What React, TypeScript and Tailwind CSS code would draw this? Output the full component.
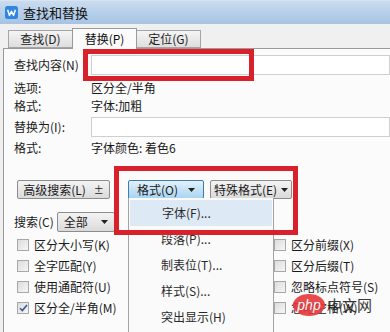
import React from "react";

const font = "font-['Microsoft_YaHei','Noto_Sans_CJK_SC','Noto_Sans',sans-serif]";

function Caret() {
  return (
    <svg width="7" height="4" viewBox="0 0 7 4" className="shrink-0">
      <path d="M0 0h7L3.5 4z" fill="#222" />
    </svg>
  );
}

function Tab({ label, active }: { label: string; active?: boolean }) {
  return active ? (
    <div className="relative z-10 -mb-px flex h-[21px] w-[65px] items-center justify-center border border-b-0 border-[#9a9a9a] bg-[#fbfbfb] text-[12px] text-[#111]">
      {label}
    </div>
  ) : (
    <div className="flex h-[18px] w-[65px] items-center justify-center border border-[#a5a5a5] bg-gradient-to-b from-[#f4f4f4] to-[#dedede] text-[12px] text-[#222]">
      {label}
    </div>
  );
}

function Check({ label, checked }: { label: string; checked?: boolean }) {
  return (
    <div className="flex h-[21px] items-center gap-[5px] text-[12px] text-[#1a1a1a]">
      <span className="relative flex h-[12px] w-[12px] items-center justify-center border border-[#a8a8a8] bg-gradient-to-br from-[#dcdcdc] to-[#f6f6f6]">
        {checked ? (
          <svg width="9" height="8" viewBox="0 0 9 8">
            <path d="M1 4.2 3.4 6.6 8 1" stroke="#3a5a99" strokeWidth="1.6" fill="none" />
          </svg>
        ) : null}
      </span>
      <span>{label}</span>
    </div>
  );
}

function FieldRow({ label, children, h }: { label: string; children: React.ReactNode; h: string }) {
  return (
    <div className={`flex items-center ${h}`}>
      <span className="w-[77px] shrink-0 text-[12px] text-[#1a1a1a]">{label}</span>
      {children}
    </div>
  );
}

const menuItems = ["字体(F)...", "段落(P)...", "制表位(T)...", "样式(S)...", "突出显示(H)"];

export default function App() {
  return (
    <div className={`relative flex h-[332px] w-[390px] flex-col overflow-hidden bg-[#f0f0f0] ${font}`}>
      {/* title bar */}
      <div className="flex h-[24px] items-center gap-[5px] border-t border-[#d8e4f0] bg-gradient-to-b from-[#cadcef] to-[#a6c3e3] px-[5px]">
        <svg width="13" height="13" viewBox="0 0 13 13">
          <rect width="13" height="13" rx="2.5" fill="#2f86e0" />
          <path d="M2.6 3.8 4.5 9.4 6.5 5.4 8.5 9.4 10.4 3.8" stroke="#fff" strokeWidth="1.5" fill="none" strokeLinejoin="round" />
        </svg>
        <span className="text-[13px] text-[#111]">查找和替换</span>
      </div>

      {/* tabs */}
      <div className="flex h-[24px] items-end pl-[8px]">
        <Tab label="查找(D)" />
        <div className="-ml-px">
          <Tab label="替换(P)" active />
        </div>
        <div className="-ml-px">
          <Tab label="定位(G)" />
        </div>
      </div>

      {/* panel */}
      <div className="ml-[3px] flex flex-1 flex-col border-l border-t border-[#9a9a9a] bg-[#fbfbfb] pl-[10px] pt-[6px]">
        <FieldRow label="查找内容(N)" h="h-[20px]">
          <div className="h-[20px] flex-1 border border-[#cfcfcf] bg-white" />
        </FieldRow>
        <div className="mt-[4px]" />
        <FieldRow label="选项:" h="h-[18px]">
          <span className="text-[12px] text-[#1a1a1a]">区分全/半角</span>
        </FieldRow>
        <FieldRow label="格式:" h="h-[18px]">
          <span className="text-[12px] text-[#1a1a1a]">字体:加粗</span>
        </FieldRow>
        <div className="mt-[2px]" />
        <FieldRow label="替换为(I):" h="h-[20px]">
          <div className="h-[20px] flex-1 border border-[#cfcfcf] bg-white" />
        </FieldRow>
        <div className="mt-[2px]" />
        <FieldRow label="格式:" h="h-[18px]">
          <span className="text-[12px] text-[#1a1a1a]">字体颜色: 着色6</span>
        </FieldRow>

        {/* buttons */}
        <div className="mt-[23px] flex h-[19px] items-center pl-[3px]">
          <div className="flex h-[19px] w-[93px] items-center justify-center gap-[8px] rounded-[2px] border border-[#8c8c8c] bg-gradient-to-b from-[#f4f4f4] to-[#dadada] text-[12px] text-[#1a1a1a]">
            <span>高级搜索(L)</span>
            <span className="text-[10px]">±</span>
          </div>
          <div className="ml-[18px] flex h-[19px] w-[76px] items-center justify-center gap-[10px] rounded-[2px] border border-[#3d7bad] bg-gradient-to-b from-[#e3f1fb] to-[#a9d4f1] text-[12px] text-[#1a1a1a]">
            <span>格式(O)</span>
            <Caret />
          </div>
          <div className="ml-[6px] flex h-[19px] w-[82px] items-center justify-center gap-[4px] rounded-[2px] border border-[#8c8c8c] bg-gradient-to-b from-[#f4f4f4] to-[#dadada] text-[12px] text-[#1a1a1a]">
            <span>特殊格式(E)</span>
            <Caret />
          </div>
        </div>

        {/* options */}
        <div className="flex">
          <div className="flex w-[260px] flex-col">
            <div className="mt-[13px] flex h-[20px] items-center gap-[3px] text-[12px] text-[#1a1a1a]">
              <span>搜索(C)</span>
              <div className="flex h-[20px] w-[58px] items-center justify-between rounded-[2px] border border-[#8c8c8c] bg-gradient-to-b from-[#f4f4f4] to-[#dadada] px-[6px]">
                <span>全部</span>
                <Caret />
              </div>
            </div>
            <div className="mt-[2px] pl-[3px]">
              <Check label="区分大小写(K)" />
              <Check label="全字匹配(Y)" />
              <Check label="使用通配符(U)" />
              <Check label="区分全/半角(M)" checked />
            </div>
          </div>
          <div className="pt-[35px]">
            <Check label="区分前缀(X)" />
            <Check label="区分后缀(T)" />
            <Check label="忽略标点符号(S)" />
            <Check label="忽略空格(W)" />
          </div>
        </div>
      </div>

      {/* dropdown menu */}
      <div className="absolute left-[128px] top-[198px] flex h-[140px] w-[146px] flex-col border-x border-[#a3a3a3] bg-[#fafafa] pt-[2px] text-[12px] text-[#2a2a2a]">
        {menuItems.map((item, i) => (
          <div
            key={item}
            className={`flex h-[26px] items-center pl-[32px] ${i === 0 ? "mx-[1px] h-[23px] bg-[#dde9f5]" : ""}`}
          >
            {item}
          </div>
        ))}
      </div>

      {/* red highlight boxes */}
      <div className="absolute left-[83px] top-[49px] h-[32px] w-[171px] border-[5px] border-[#d8212b]" />
      <div className="absolute left-[114px] top-[166px] h-[69px] w-[184px] border-[5px] border-[#d8212b]" />

      {/* watermark */}
      <div className="absolute left-[293px] top-[294px] flex items-center opacity-90">
        <span className="flex h-[22px] w-[32px] items-center justify-center rounded-[50%] bg-[#e5383b] text-[14px] italic text-white font-['Liberation_Sans',sans-serif]">
          php
        </span>
        <span className="ml-[2px] text-[15px] text-[#222]">中文网</span>
      </div>
    </div>
  );
}
